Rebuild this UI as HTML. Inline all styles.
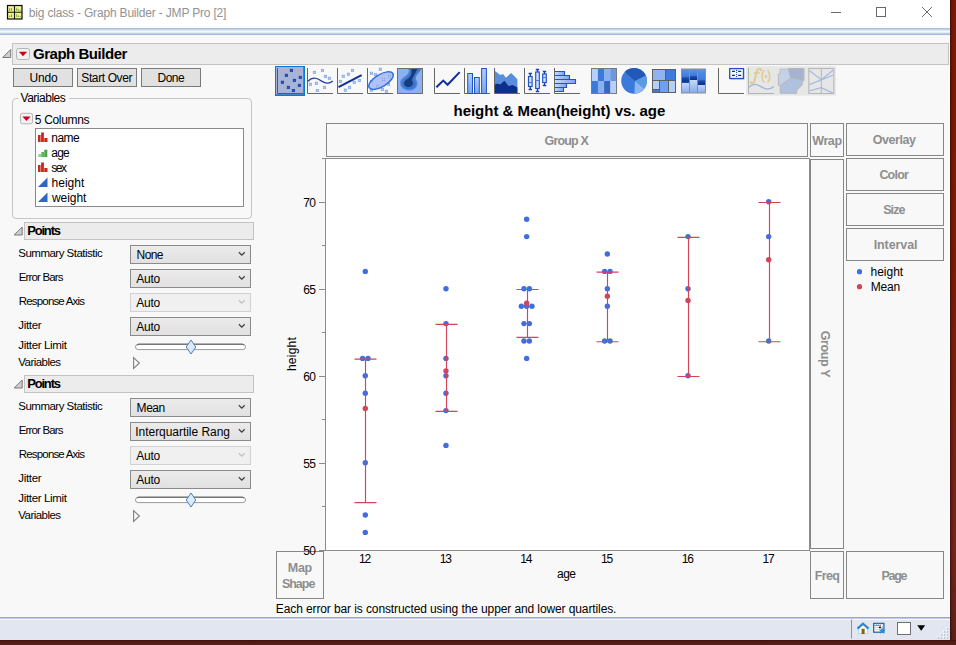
<!DOCTYPE html>
<html>
<head>
<meta charset="utf-8">
<title>big class - Graph Builder - JMP Pro [2]</title>
<style>
html,body{margin:0;padding:0;}
body{width:956px;height:645px;overflow:hidden;position:relative;background:#55201a;font-family:"Liberation Sans",sans-serif;font-size:12px;color:#000;}
.abs{position:absolute;}
#desk{position:absolute;left:950px;top:0;width:6px;height:645px;background:linear-gradient(to right,rgba(30,8,4,0.550) 0,rgba(30,8,4,0.250) 1.5px,rgba(0,0,0,0) 3.5px),linear-gradient(to bottom,#7a1806 0%,#7c1a08 45%,#74241a 85%,#5a2018 100%);}
#deskb{position:absolute;left:0;top:640px;width:956px;height:5px;background:linear-gradient(to bottom,#3c1009 0,#4c1a14 1.5px,#58201a 5px);}
#win{position:absolute;left:0;top:0;width:950px;height:640px;background:#f8f8f8;overflow:hidden;}
#titlebar{position:absolute;left:0;top:0;width:950px;height:28px;background:#fff;}
#band{position:absolute;left:0;top:28px;width:950px;height:7px;background:linear-gradient(to bottom,#a9bfda 0px,#adc3dd 1px,#d6e1ee 2px,#f5f7fb 3.5px,#e4ebf4 4.5px,#bdcfe5 5.5px,#a3bbd9 6.5px,#a3bbd9 7px);}
.t{position:absolute;white-space:nowrap;display:block;}
.hdr{position:absolute;background:#ececec;border:1px solid #c3c3c3;box-sizing:border-box;}
.btn{position:absolute;box-sizing:border-box;border:1px solid #7a7a7a;background:#e1e1e1;height:19px;width:60px;top:68px;}
.dd{position:absolute;box-sizing:border-box;left:130px;width:121px;height:19px;border:1px solid #8b8b8b;background:linear-gradient(to bottom,#ebebeb,#e1e1e1);}
.dd.dis{border-color:#d2d2d2;background:#f0f0f0;}
.zone{position:absolute;box-sizing:border-box;border:1px solid #868686;background:#f8f8f8;}
</style>
</head>
<body>
<div id="desk"></div><div id="deskb"></div>
<div id="win">
<div id="titlebar"></div>
<div id="band"></div>
<div class="abs" style="left:949px;top:35px;width:1px;height:583px;background:#fff;"></div>

<!-- title bar icon + window buttons -->
<svg class="abs" style="left:0;top:0" width="950" height="28">
  <rect x="7.500" y="5.500" width="14.500" height="13.500" fill="#f0f08e" stroke="#0a0a0a" stroke-width="1.200"/>
  <path d="M14.500 5.500 V19 M7.500 12.200 H22" stroke="#1a1a1a" stroke-width="1.100" fill="none"/>
  <g fill="#5a9a32"><rect x="9.300" y="8.200" width="0.900" height="2.600"/><rect x="11.200" y="8.200" width="0.900" height="2.600"/><rect x="16.300" y="8.200" width="0.900" height="2.600"/><rect x="18.200" y="9.200" width="0.900" height="1.600"/><rect x="19.800" y="10" width="0.900" height="0.800"/>
  <rect x="9.300" y="15.600" width="0.900" height="1.400"/><rect x="11.200" y="14.400" width="0.900" height="2.600"/><rect x="16.300" y="14.400" width="0.900" height="2.600"/><rect x="18.200" y="15.600" width="0.900" height="1.400"/><rect x="19.800" y="16.200" width="0.900" height="0.800"/></g>
  <path d="M831 12.500 H841" stroke="#686868" stroke-width="1"/>
  <rect x="876.500" y="7.500" width="9" height="9" fill="none" stroke="#686868" stroke-width="1"/>
  <path d="M922 7 L932 17 M932 7 L922 17" stroke="#6e6e6e" stroke-width="1" fill="none"/>
</svg>
<!-- Graph Builder header -->
<div class="hdr" style="left:12px;top:43px;width:937px;height:22px;"></div>
<div class="btn" style="left:13px;"></div>
<div class="btn" style="left:77px;"></div>
<div class="btn" style="left:141px;"></div>
<!-- Variables group -->
<div class="abs" style="left:12px;top:98px;width:240px;height:121px;border:1px solid #c6c6c6;border-radius:4px;box-sizing:border-box;"></div>
<div class="abs" style="left:35px;top:128px;width:209px;height:79px;border:1px solid #8a8a8a;background:#fff;box-sizing:border-box;"></div>
<div class="abs" style="left:18px;top:92px;width:51px;height:12px;background:#f8f8f8;"></div>
<svg class="abs" style="left:0;top:40px" width="260" height="180">
<path d="M2.7 17.5 L10.7 17.5 L10.7 9.5 Z" fill="#cfcfcf" stroke="#787878" stroke-width="1"/><rect x="16.5" y="8.5" width="13" height="11" rx="2" fill="#f1f1f1" stroke="#b4b4b4"/><path d="M18.9 11.8 L27.1 11.8 L23.0 16.3 Z" fill="#cc0014"/><rect x="20.5" y="73.3" width="12" height="10.5" rx="2" fill="#f1f1f1" stroke="#b4b4b4"/><path d="M22.4 76.6 L30.6 76.6 L26.5 81.1 Z" fill="#cc0014"/>
  <g fill="#cf2516">
    <rect x="38" y="95" width="2.600" height="7" fill="#b93324"/><rect x="41.100" y="92.500" width="2.800" height="9.500"/><rect x="44.300" y="98" width="3.200" height="4"/>
    <rect x="38" y="125" width="2.600" height="7" fill="#b93324"/><rect x="41.100" y="122.500" width="2.800" height="9.500"/><rect x="44.300" y="128" width="3.200" height="4"/>
  </g>
  <g>
    <rect x="38.300" y="114" width="3" height="3" fill="#93d293"/><rect x="41.300" y="112" width="3" height="5" fill="#5cb85c"/><rect x="44.300" y="109.700" width="3" height="7.300" fill="#47a647"/>
  </g>
  <g fill="#2f66c4">
    <path d="M38 147 L47.500 147 L47.500 137.500 Z"/>
    <path d="M38 162 L47.500 162 L47.500 152.500 Z"/>
  </g>
</svg>

<div class="hdr" style="left:24px;top:222px;width:230px;height:18px;"></div>
<div class="dd" style="top:245px;"></div>
<div class="dd" style="top:269px;"></div>
<div class="dd dis" style="top:293px;"></div>
<div class="dd" style="top:317px;"></div>
<svg class="abs" style="left:0;top:222px" width="260" height="150">
  <path d="M14.2 13 L22.2 13 L22.2 5 Z" fill="#cfcfcf" stroke="#787878" stroke-width="1"/>
  <g fill="none" stroke="#3c3c3c" stroke-width="1.250">
    <path d="M238.900 30.200 L241.800 33.100 L244.700 30.200"/>
    <path d="M238.900 54.200 L241.800 57.100 L244.700 54.200"/>
    <path d="M238.900 78.200 L241.800 81.100 L244.700 78.200" stroke="#c0c0c0"/>
    <path d="M238.900 102.200 L241.800 105.100 L244.700 102.200"/>
  </g>
  <rect x="135.500" y="122.200" width="110" height="5.400" rx="2.700" fill="#fff" stroke="#9a9a9a"/>
  <path d="M137 123.300 C137.600 122.500 138.200 122.200 139 122.200 H242 C242.800 122.200 243.400 122.500 244 123.300" fill="none" stroke="#5a5a5a" stroke-width="1"/>
  <path d="M191 118 L195.800 125 L191 132 L186.200 125 Z" fill="#dce9f8" stroke="#4c80c0" stroke-width="1"/>
  <path d="M133.600 135.600 L139.400 141 L133.600 146.400 Z" fill="#f8f8f8" stroke="#808080" stroke-width="1.100"/>
</svg>

<div class="hdr" style="left:24px;top:375px;width:230px;height:18px;"></div>
<div class="dd" style="top:398px;"></div>
<div class="dd" style="top:422px;"></div>
<div class="dd dis" style="top:446px;"></div>
<div class="dd" style="top:470px;"></div>
<svg class="abs" style="left:0;top:375px" width="260" height="150">
  <path d="M14.2 13 L22.2 13 L22.2 5 Z" fill="#cfcfcf" stroke="#787878" stroke-width="1"/>
  <g fill="none" stroke="#3c3c3c" stroke-width="1.250">
    <path d="M238.900 30.200 L241.800 33.100 L244.700 30.200"/>
    <path d="M238.900 54.200 L241.800 57.100 L244.700 54.200"/>
    <path d="M238.900 78.200 L241.800 81.100 L244.700 78.200" stroke="#c0c0c0"/>
    <path d="M238.900 102.200 L241.800 105.100 L244.700 102.200"/>
  </g>
  <rect x="135.500" y="122.200" width="110" height="5.400" rx="2.700" fill="#fff" stroke="#9a9a9a"/>
  <path d="M137 123.300 C137.600 122.500 138.200 122.200 139 122.200 H242 C242.800 122.200 243.400 122.500 244 123.300" fill="none" stroke="#5a5a5a" stroke-width="1"/>
  <path d="M191 118 L195.800 125 L191 132 L186.200 125 Z" fill="#dce9f8" stroke="#4c80c0" stroke-width="1"/>
  <path d="M133.600 135.600 L139.400 141 L133.600 146.400 Z" fill="#f8f8f8" stroke="#808080" stroke-width="1.100"/>
</svg>

<div class="zone" style="left:326px;top:123px;width:482px;height:34px;"></div>
<div class="zone" style="left:810px;top:123px;width:34px;height:34px;"></div>
<div class="zone" style="left:846px;top:123px;width:98px;height:33px;"></div>
<div class="zone" style="left:846px;top:158px;width:98px;height:33px;"></div>
<div class="zone" style="left:846px;top:193px;width:98px;height:33px;"></div>
<div class="zone" style="left:846px;top:228px;width:98px;height:33px;"></div>
<div class="zone" style="left:810px;top:159px;width:34px;height:390px;"></div>
<div class="zone" style="left:810px;top:551px;width:34px;height:48px;"></div>
<div class="zone" style="left:846px;top:551px;width:98px;height:48px;"></div>
<div class="zone" style="left:276px;top:551px;width:48px;height:48px;background:none;"></div>
<svg class="abs" style="left:0;top:0" width="950" height="100">
<defs>
<linearGradient id="gb" x1="0" y1="0" x2="0" y2="1"><stop offset="0" stop-color="#b4ccfa"/><stop offset="1" stop-color="#7fa4ec"/></linearGradient>
<linearGradient id="gh" x1="0" y1="0" x2="1" y2="0"><stop offset="0" stop-color="#c6dafc"/><stop offset="1" stop-color="#7ea4ee"/></linearGradient>
<linearGradient id="gl" x1="0" y1="0" x2="0" y2="1"><stop offset="0" stop-color="#c4d8fc"/><stop offset="1" stop-color="#88acf0"/></linearGradient>
<linearGradient id="gt" x1="0" y1="0" x2="0" y2="1"><stop offset="0" stop-color="#5a92e4"/><stop offset="1" stop-color="#3a78dc"/></linearGradient>
<linearGradient id="gd" x1="0" y1="0" x2="0" y2="1"><stop offset="0" stop-color="#1c4eb0"/><stop offset="1" stop-color="#08308c"/></linearGradient>
</defs>
<rect x="275" y="66" width="30" height="30" fill="#0a78d6"/><rect x="276" y="67" width="27.300" height="27.300" fill="#a7b4d7"/>
<path d="M277.500 68 V93.500 H303" fill="none" stroke="#4d587f" stroke-width="1"/>
<rect x="289.9" y="68.9" width="3" height="3" fill="#0c3aa8"/><path d="M289.9 70.4 H292.9 M291.4 68.9 V71.9" stroke="#3f68c8" stroke-width="1" stroke-opacity="0.55" fill="none"/><rect x="284.9" y="73.9" width="3" height="3" fill="#0c3aa8"/><path d="M284.9 75.4 H287.9 M286.4 73.9 V76.9" stroke="#3f68c8" stroke-width="1" stroke-opacity="0.55" fill="none"/><rect x="298.8" y="75.9" width="3" height="3" fill="#0c3aa8"/><path d="M298.8 77.4 H301.8 M300.3 75.9 V78.9" stroke="#3f68c8" stroke-width="1" stroke-opacity="0.55" fill="none"/><rect x="292.9" y="78.9" width="3" height="3" fill="#0c3aa8"/><path d="M292.9 80.4 H295.9 M294.4 78.9 V81.9" stroke="#3f68c8" stroke-width="1" stroke-opacity="0.55" fill="none"/><rect x="280.9" y="80.8" width="3" height="3" fill="#0c3aa8"/><path d="M280.9 82.3 H283.9 M282.4 80.8 V83.8" stroke="#3f68c8" stroke-width="1" stroke-opacity="0.55" fill="none"/><rect x="297.9" y="83.9" width="3" height="3" fill="#0c3aa8"/><path d="M297.9 85.4 H300.9 M299.4 83.9 V86.9" stroke="#3f68c8" stroke-width="1" stroke-opacity="0.55" fill="none"/><rect x="286.9" y="85.9" width="3" height="3" fill="#0c3aa8"/><path d="M286.9 87.4 H289.9 M288.4 85.9 V88.9" stroke="#3f68c8" stroke-width="1" stroke-opacity="0.55" fill="none"/><rect x="291.9" y="89.0" width="3" height="3" fill="#0c3aa8"/><path d="M291.9 90.5 H294.9 M293.4 89.0 V92.0" stroke="#3f68c8" stroke-width="1" stroke-opacity="0.55" fill="none"/>
<path d="M307.5 68 V93.500 H333" fill="none" stroke="#666666" stroke-width="1"/>
<rect x="312.9" y="70.9" width="3" height="3" fill="#7ea2e4"/><path d="M312.9 72.4 H315.9 M314.4 70.9 V73.9" stroke="#c4d6f6" stroke-width="1" stroke-opacity="0.55" fill="none"/><rect x="321.0" y="68.9" width="3" height="3" fill="#7ea2e4"/><path d="M321.0 70.4 H324.0 M322.5 68.9 V71.9" stroke="#c4d6f6" stroke-width="1" stroke-opacity="0.55" fill="none"/><rect x="323.9" y="74.9" width="3" height="3" fill="#7ea2e4"/><path d="M323.9 76.4 H326.9 M325.4 74.9 V77.9" stroke="#c4d6f6" stroke-width="1" stroke-opacity="0.55" fill="none"/><rect x="327.9" y="76.8" width="3" height="3" fill="#7ea2e4"/><path d="M327.9 78.3 H330.9 M329.4 76.8 V79.8" stroke="#c4d6f6" stroke-width="1" stroke-opacity="0.55" fill="none"/><rect x="308.9" y="82.8" width="3" height="3" fill="#7ea2e4"/><path d="M308.9 84.3 H311.9 M310.4 82.8 V85.8" stroke="#c4d6f6" stroke-width="1" stroke-opacity="0.55" fill="none"/><rect x="314.9" y="81.8" width="3" height="3" fill="#7ea2e4"/><path d="M314.9 83.3 H317.9 M316.4 81.8 V84.8" stroke="#c4d6f6" stroke-width="1" stroke-opacity="0.55" fill="none"/><rect x="323.0" y="85.9" width="3" height="3" fill="#7ea2e4"/><path d="M323.0 87.4 H326.0 M324.5 85.9 V88.9" stroke="#c4d6f6" stroke-width="1" stroke-opacity="0.55" fill="none"/><rect x="315.9" y="89.0" width="3" height="3" fill="#7ea2e4"/><path d="M315.9 90.5 H318.9 M317.4 89.0 V92.0" stroke="#c4d6f6" stroke-width="1" stroke-opacity="0.55" fill="none"/>
<path d="M308 81.300 C310.500 78.500 313.500 77.600 316.500 78.500 C320.500 79.700 323.500 83.200 327.200 83.200 C329.500 83.200 331.500 82.300 332.700 81" fill="none" stroke="#1d3f9f" stroke-width="1.300"/>
<path d="M337.5 68 V93.500 H363" fill="none" stroke="#666666" stroke-width="1"/>
<rect x="351.0" y="68.9" width="3" height="3" fill="#7ea2e4"/><path d="M351.0 70.4 H354.0 M352.5 68.9 V71.9" stroke="#c4d6f6" stroke-width="1" stroke-opacity="0.55" fill="none"/><rect x="346.9" y="72.8" width="3" height="3" fill="#7ea2e4"/><path d="M346.9 74.3 H349.9 M348.4 72.8 V75.8" stroke="#c4d6f6" stroke-width="1" stroke-opacity="0.55" fill="none"/><rect x="341.8" y="74.8" width="3" height="3" fill="#7ea2e4"/><path d="M341.8 76.3 H344.8 M343.3 74.8 V77.8" stroke="#c4d6f6" stroke-width="1" stroke-opacity="0.55" fill="none"/><rect x="338.9" y="79.9" width="3" height="3" fill="#7ea2e4"/><path d="M338.9 81.4 H341.9 M340.4 79.9 V82.9" stroke="#c4d6f6" stroke-width="1" stroke-opacity="0.55" fill="none"/><rect x="357.9" y="79.0" width="3" height="3" fill="#7ea2e4"/><path d="M357.9 80.5 H360.9 M359.4 79.0 V82.0" stroke="#c4d6f6" stroke-width="1" stroke-opacity="0.55" fill="none"/><rect x="352.8" y="80.9" width="3" height="3" fill="#7ea2e4"/><path d="M352.8 82.4 H355.8 M354.3 80.9 V83.9" stroke="#c4d6f6" stroke-width="1" stroke-opacity="0.55" fill="none"/><rect x="348.0" y="85.9" width="3" height="3" fill="#7ea2e4"/><path d="M348.0 87.4 H351.0 M349.5 85.9 V88.9" stroke="#c4d6f6" stroke-width="1" stroke-opacity="0.55" fill="none"/><rect x="343.9" y="88.7" width="3" height="3" fill="#7ea2e4"/><path d="M343.9 90.2 H346.9 M345.4 88.7 V91.7" stroke="#c4d6f6" stroke-width="1" stroke-opacity="0.55" fill="none"/>
<path d="M338.500 87.200 L361.600 75.200" fill="none" stroke="#0d2f9a" stroke-width="2"/>
<path d="M367.5 68 V93.500 H393" fill="none" stroke="#666666" stroke-width="1"/>
<ellipse cx="381" cy="80.600" rx="13.800" ry="6.100" transform="rotate(-31 381 80.600)" fill="#b3c2f2"/>
<rect x="378.8" y="67.8" width="3" height="3" fill="#7ea2e4"/><path d="M378.8 69.3 H381.8 M380.3 67.8 V70.8" stroke="#c4d6f6" stroke-width="1" stroke-opacity="0.55" fill="none"/><rect x="369.9" y="71.8" width="3" height="3" fill="#7ea2e4"/><path d="M369.9 73.3 H372.9 M371.4 71.8 V74.8" stroke="#c4d6f6" stroke-width="1" stroke-opacity="0.55" fill="none"/><rect x="373.9" y="73.1" width="3" height="3" fill="#7ea2e4"/><path d="M373.9 74.6 H376.9 M375.4 73.1 V76.1" stroke="#c4d6f6" stroke-width="1" stroke-opacity="0.55" fill="none"/><rect x="388.0" y="74.8" width="3" height="3" fill="#7ea2e4"/><path d="M388.0 76.3 H391.0 M389.5 74.8 V77.8" stroke="#c4d6f6" stroke-width="1" stroke-opacity="0.55" fill="none"/><rect x="382.0" y="78.0" width="3" height="3" fill="#7ea2e4"/><path d="M382.0 79.5 H385.0 M383.5 78.0 V81.0" stroke="#c4d6f6" stroke-width="1" stroke-opacity="0.55" fill="none"/><rect x="369.9" y="79.9" width="3" height="3" fill="#7ea2e4"/><path d="M369.9 81.4 H372.9 M371.4 79.9 V82.9" stroke="#c4d6f6" stroke-width="1" stroke-opacity="0.55" fill="none"/><rect x="387.0" y="82.8" width="3" height="3" fill="#7ea2e4"/><path d="M387.0 84.3 H390.0 M388.5 82.8 V85.8" stroke="#c4d6f6" stroke-width="1" stroke-opacity="0.55" fill="none"/><rect x="376.0" y="84.8" width="3" height="3" fill="#7ea2e4"/><path d="M376.0 86.3 H379.0 M377.5 84.8 V87.8" stroke="#c4d6f6" stroke-width="1" stroke-opacity="0.55" fill="none"/><rect x="380.9" y="87.9" width="3" height="3" fill="#7ea2e4"/><path d="M380.9 89.4 H383.9 M382.4 87.9 V90.9" stroke="#c4d6f6" stroke-width="1" stroke-opacity="0.55" fill="none"/><rect x="369.9" y="88.7" width="3" height="3" fill="#7ea2e4"/><path d="M369.9 90.2 H372.9 M371.4 88.7 V91.7" stroke="#c4d6f6" stroke-width="1" stroke-opacity="0.55" fill="none"/><rect x="384.9" y="89.8" width="3" height="3" fill="#7ea2e4"/><path d="M384.9 91.3 H387.9 M386.4 89.8 V92.8" stroke="#c4d6f6" stroke-width="1" stroke-opacity="0.55" fill="none"/>
<ellipse cx="381" cy="80.600" rx="13.800" ry="6.100" transform="rotate(-31 381 80.600)" fill="none" stroke="#2e6fe2" stroke-width="1.500"/>
<rect x="397.500" y="68.500" width="25" height="25" fill="#8cb1f0" stroke="#6e6e6e" stroke-width="1"/>
<path d="M408 69 C410 71 408.500 73.500 406.100 75.500 C403.500 77.500 401 78.500 400.400 81.500 C399.800 85 401.500 88 405 89.600 C409 91.200 413.500 90.500 416 87.500 C418.200 85 417.800 82 416 79.500 C415.300 77.500 416.500 75.500 418 73.800 C419.500 72 420.800 70.500 421.500 69 Z" fill="#4d82d4"/>
<path d="M409.800 69 C411 71.500 410 74 408 76.200 C405.500 78.500 403 79.500 402.400 82 C401.800 85 403.300 87.300 406 88.400 C409.500 89.600 413 89 414.800 86.500 C416.200 84.500 415.800 82 414.300 80 C413.600 78 415 75.800 416.400 73.800 C417.800 72 419 70.500 419.600 69 Z" fill="#3f72c8"/>
<path d="M411.400 69 V73.500 C411 75.500 410 77 408.500 78.200 C406.500 79.500 404.700 80.500 404.200 82.800 C403.800 85 405 86.600 407.500 87 C410 87.400 412.300 86.200 412.800 83.800 C413.100 82.300 412.500 81.200 411.800 80.300 C412.200 78.500 413 77.200 413.800 76 L417.300 69 Z" fill="#163c80"/>
<rect x="397.500" y="68.500" width="25" height="25" fill="none" stroke="#6e6e6e" stroke-width="1"/>
<path d="M434.5 68 V93.500 H460" fill="none" stroke="#666666" stroke-width="1"/>
<path d="M436.400 87.300 L443.200 80.600 L447.600 84.800 L459.700 72.100" fill="none" stroke="#0d2f9a" stroke-width="2" stroke-linejoin="miter"/>
<path d="M464.5 68 V93.500 H490" fill="none" stroke="#666666" stroke-width="1"/>
<rect x="467.700" y="73.500" width="4.800" height="20" fill="url(#gb)" stroke="#1f55c8"/><rect x="474.500" y="77.500" width="4.800" height="16" fill="url(#gb)" stroke="#1f55c8"/><rect x="481.600" y="68.500" width="4.800" height="25" fill="url(#gb)" stroke="#1f55c8"/>
<path d="M494.5 68 V93.500 H520" fill="none" stroke="#666666" stroke-width="1"/>
<path d="M495 70.900 L500.200 75.100 L503.100 74 L505.900 77.700 L511.200 73 L517.400 79.300 V93 H495 Z" fill="#5a8edc"/>
<path d="M495 84.500 L497.600 83.400 L500.200 84.500 L504.400 80.800 L508.500 86.100 L512.700 85 L517.400 87.600 V93 H495 Z" fill="#0b2f8a"/>
<path d="M524.5 68 V93.500 H550" fill="none" stroke="#666666" stroke-width="1"/>
<path d="M530.3 73.5 V89.5 M528.5999999999999 73.5 H532.0 M528.5999999999999 89.5 H532.0" stroke="#1442b4" stroke-width="1.300" fill="none"/><rect x="528.5" y="76.5" width="3.600" height="10.0" fill="#d2e1fb" stroke="#1c50c4" stroke-width="1.150"/><path d="M528.5 82.5 H532.0999999999999" stroke="#3f72d8" stroke-width="0.900"/>
<path d="M537.5 69.5 V91.5 M535.8 69.5 H539.2 M535.8 91.5 H539.2" stroke="#1442b4" stroke-width="1.300" fill="none"/><rect x="535.7" y="72" width="3.600" height="16.5" fill="#d2e1fb" stroke="#1c50c4" stroke-width="1.150"/><path d="M535.7 80.5 H539.3" stroke="#3f72d8" stroke-width="0.900"/>
<path d="M544.5 71.5 V85.5 M542.8 71.5 H546.2 M542.8 85.5 H546.2" stroke="#1442b4" stroke-width="1.300" fill="none"/><rect x="542.7" y="74" width="3.600" height="8.5" fill="#d2e1fb" stroke="#1c50c4" stroke-width="1.150"/><path d="M542.7 77.5 H546.3" stroke="#3f72d8" stroke-width="0.900"/>
<path d="M554.5 68 V93.500 H580" fill="none" stroke="#666666" stroke-width="1"/>
<rect x="555" y="71.5" width="9.5" height="4.0" fill="url(#gh)"/><path d="M555 71.5 H564.5 V75.5 H555" fill="none" stroke="#1f55c8" stroke-width="1.100"/>
<rect x="555" y="75.5" width="14.5" height="4.0" fill="url(#gh)"/><path d="M555 75.5 H569.5 V79.5 H555" fill="none" stroke="#1f55c8" stroke-width="1.100"/>
<rect x="555" y="79.5" width="20.5" height="4.0" fill="url(#gh)"/><path d="M555 79.5 H575.5 V83.5 H555" fill="none" stroke="#1f55c8" stroke-width="1.100"/>
<rect x="555" y="83.5" width="11.5" height="4.0" fill="url(#gh)"/><path d="M555 83.5 H566.5 V87.5 H555" fill="none" stroke="#1f55c8" stroke-width="1.100"/>
<rect x="555" y="87.5" width="8.5" height="4.0" fill="url(#gh)"/><path d="M555 87.5 H563.5 V91.5 H555" fill="none" stroke="#1f55c8" stroke-width="1.100"/>
<rect x="591.5" y="68.500" width="6.7" height="12.500" fill="#b6d0fa"/>
<rect x="591.5" y="81" width="6.7" height="12.500" fill="#3b79da"/>
<rect x="597.9" y="68.500" width="6.5" height="12.500" fill="#3b79da"/>
<rect x="597.9" y="81" width="6.5" height="12.500" fill="#8ab0ee"/>
<rect x="604.1" y="68.500" width="6.5" height="12.500" fill="#8ab0ee"/>
<rect x="604.1" y="81" width="6.5" height="12.500" fill="#3666c2"/>
<rect x="610.3" y="68.500" width="6.5" height="12.500" fill="#6a98e2"/>
<rect x="610.3" y="81" width="6.5" height="12.500" fill="#b6d0fa"/>
<rect x="591.500" y="68.500" width="25" height="25" fill="none" stroke="#7a7a7a" stroke-width="1"/>
<clipPath id="pc"><circle cx="634.1" cy="80.8" r="12.9"/></clipPath><circle cx="634.1" cy="80.8" r="12.9" fill="#3a7ada"/><g clip-path="url(#pc)">
<path d="M634.9 81.0 L623.83 71.03 A14.9 14.9 0 0 1 648.29 74.47 Z" fill="#2458b8"/>
<path d="M634.9 81.0 L648.29 74.47 A14.9 14.9 0 0 1 646.31 90.58 Z" fill="#5c9ae2"/>
<path d="M634.9 81.0 L646.31 90.58 A14.9 14.9 0 0 1 634.38 95.89 Z" fill="#8cb6f6"/></g>
<rect x="652" y="69" width="24" height="24" fill="#5f5f5f"/>
<rect x="653" y="70" width="12" height="10" fill="#8fb4f0"/><rect x="666" y="70" width="9" height="10" fill="#3c7cdc"/>
<rect x="653" y="81" width="6" height="8" fill="#b4d0fa"/><rect x="653" y="90" width="6" height="2" fill="#3c7cdc"/>
<rect x="660" y="81" width="8" height="11" fill="#6ea0f4"/><rect x="669" y="81" width="6" height="11" fill="#b4d0fa"/>
<rect x="681" y="68.500" width="25" height="25" fill="#8e8e8e"/>
<rect x="682" y="69.500" width="7" height="7.7" fill="url(#gt)"/><rect x="682" y="77.2" width="7" height="5.7" fill="url(#gd)"/><rect x="682" y="82.9" width="7" height="9.6" fill="url(#gl)"/>
<rect x="690" y="69.500" width="7" height="6.6" fill="url(#gt)"/><rect x="690" y="76.1" width="7" height="3.9" fill="url(#gd)"/><rect x="690" y="80" width="7" height="12.5" fill="url(#gl)"/>
<rect x="698" y="69.500" width="7" height="10.8" fill="url(#gt)"/><rect x="698" y="80.3" width="7" height="4.7" fill="url(#gd)"/><rect x="698" y="85" width="7" height="7.5" fill="url(#gl)"/>
<path d="M718.5 68 V93.500 H744" fill="none" stroke="#666666" stroke-width="1"/>
<rect x="730.300" y="69.300" width="14" height="10.300" fill="#b9c4dc"/>
<rect x="729.700" y="68.600" width="13.800" height="9.900" fill="#f4f8ff" stroke="#2450c4" stroke-width="1.300"/>
<path d="M732 71.400 H735 M738.200 71.400 H741.200 M732 75.400 H735 M738.200 75.400 H741.200" stroke="#0c2f9a" stroke-width="1.100"/>
<g fill="#0c2f9a"><circle cx="736.600" cy="70.400" r="0.600"/><circle cx="736.600" cy="72.500" r="0.600"/><circle cx="736.600" cy="74.500" r="0.600"/><circle cx="736.600" cy="76.500" r="0.600"/></g>
<rect x="746.300" y="66.200" width="89.600" height="29.400" fill="#e6e6e6"/>
<path d="M748.500 68 V93.500 H774" fill="none" stroke="#b2b2b2" stroke-width="1"/>
<path d="M761.200 70.300 C760.600 68.300 757.900 68 757.200 70.600 L754.400 80.800 C753.800 83.400 751.700 83.700 750.600 82.300" fill="none" stroke="#ddcc90" stroke-width="2" stroke-linecap="round"/><path d="M753.600 73 H760" stroke="#ddcc90" stroke-width="1.400"/>
<path d="M764.100 70.200 C761.300 73.500 761.300 79.300 764.100 82.600 M767.600 70.200 C770.400 73.500 770.400 79.300 767.600 82.600" fill="none" stroke="#ddcc90" stroke-width="1.500"/><circle cx="765.900" cy="76.500" r="1.400" fill="#ddcc90"/>
<path d="M748.800 87.300 C751 85.200 753 84.200 755 84.300 C759.500 84.500 763 89 767.600 89.100 C770 89.100 772.300 88 773.900 86.600" fill="none" stroke="#9fb3d8" stroke-width="1.300"/>
<path d="M788.200 68.500 H804 V80.600 L802.200 81.600 V85.100 L796.700 90.100 V93.300 H780.200 V85.600 H778.400 V74 H780.200 V69.200 H788.200 Z" fill="#b0c1df" stroke="#b6b6b6" stroke-width="1"/>
<path d="M788.200 68.800 C788.800 72.500 790 75.500 790.700 78.100 L780.200 85.400 V85.600 H778.900 V74.300 H780.600 V69.600 H788 Z" fill="#c5d1e7"/>
<path d="M788.600 69 H803.500 V80.400 L790.700 78.100 C790 75.500 788.800 72.500 788.600 69 Z" fill="#a5b3d0"/>
<path d="M788.200 68.500 C788.800 72.500 790 75.500 790.700 78.100 L804 80.600 M790.700 78.100 L780.200 85.600" fill="none" stroke="#b8b8b8" stroke-width="0.900"/>
<rect x="808.800" y="68.500" width="25" height="25" fill="#e6e6e6" stroke="#b6b6b6" stroke-width="1"/>
<path d="M809.300 70.500 L821.300 79.800 L833.400 70 M809.300 84.600 L821.300 79.900 L833.400 75 M809.300 90.900 L821.300 87.600 L832.900 93.100" fill="none" stroke="#a6bbe2" stroke-width="1.200"/>
<path d="M821.300 68.500 V93.500" stroke="#b6b6b6" stroke-width="1"/>
</svg><svg class="abs" style="left:0;top:0" width="950" height="640">
<rect x="326" y="159" width="483" height="391" fill="#fff"/>
<path d="M322 158.500 H810 M325.500 158 V551 M319 550.500 H810 M809.500 158 V551" stroke="#8c8c8c" stroke-width="1" fill="none"/>
<path d="M319 202.5 H325 M319 289.5 H325 M319 376.5 H325 M319 463.5 H325 M322 245.5 H325 M322 332.5 H325 M322 419.5 H325 M322 506.5 H325" stroke="#8c8c8c" stroke-width="1" fill="none"/>
<circle cx="365.30" cy="271.40" r="2.7" fill="#416de0"/>
<circle cx="362.60" cy="358.40" r="2.7" fill="#416de0"/>
<circle cx="368.00" cy="358.40" r="2.7" fill="#416de0"/>
<circle cx="365.30" cy="375.80" r="2.7" fill="#416de0"/>
<circle cx="365.30" cy="393.20" r="2.7" fill="#416de0"/>
<circle cx="365.30" cy="462.80" r="2.7" fill="#416de0"/>
<circle cx="365.30" cy="515.00" r="2.7" fill="#416de0"/>
<circle cx="365.30" cy="532.40" r="2.7" fill="#416de0"/>
<circle cx="445.98" cy="288.80" r="2.7" fill="#416de0"/>
<circle cx="445.98" cy="323.60" r="2.7" fill="#416de0"/>
<circle cx="445.98" cy="358.40" r="2.7" fill="#416de0"/>
<circle cx="445.98" cy="375.80" r="2.7" fill="#416de0"/>
<circle cx="445.98" cy="393.20" r="2.7" fill="#416de0"/>
<circle cx="445.98" cy="410.60" r="2.7" fill="#416de0"/>
<circle cx="445.98" cy="445.40" r="2.7" fill="#416de0"/>
<circle cx="526.66" cy="219.20" r="2.7" fill="#416de0"/>
<circle cx="526.66" cy="236.60" r="2.7" fill="#416de0"/>
<circle cx="523.96" cy="288.80" r="2.7" fill="#416de0"/>
<circle cx="529.36" cy="288.80" r="2.7" fill="#416de0"/>
<circle cx="521.36" cy="306.20" r="2.7" fill="#416de0"/>
<circle cx="526.66" cy="306.20" r="2.7" fill="#416de0"/>
<circle cx="531.96" cy="306.20" r="2.7" fill="#416de0"/>
<circle cx="523.96" cy="323.60" r="2.7" fill="#416de0"/>
<circle cx="529.36" cy="323.60" r="2.7" fill="#416de0"/>
<circle cx="523.96" cy="341.00" r="2.7" fill="#416de0"/>
<circle cx="529.36" cy="341.00" r="2.7" fill="#416de0"/>
<circle cx="526.66" cy="358.40" r="2.7" fill="#416de0"/>
<circle cx="607.34" cy="254.00" r="2.7" fill="#416de0"/>
<circle cx="604.64" cy="271.40" r="2.7" fill="#416de0"/>
<circle cx="610.04" cy="271.40" r="2.7" fill="#416de0"/>
<circle cx="607.34" cy="288.80" r="2.7" fill="#416de0"/>
<circle cx="607.34" cy="306.20" r="2.7" fill="#416de0"/>
<circle cx="604.64" cy="341.00" r="2.7" fill="#416de0"/>
<circle cx="610.04" cy="341.00" r="2.7" fill="#416de0"/>
<circle cx="688.02" cy="236.60" r="2.7" fill="#416de0"/>
<circle cx="688.02" cy="288.80" r="2.7" fill="#416de0"/>
<circle cx="688.02" cy="375.80" r="2.7" fill="#416de0"/>
<circle cx="768.70" cy="201.80" r="2.7" fill="#416de0"/>
<circle cx="768.70" cy="236.60" r="2.7" fill="#416de0"/>
<circle cx="768.70" cy="341.00" r="2.7" fill="#416de0"/>
<path d="M365.50 359.10 V502.65 M354.50 359.10 H376.50 M354.50 502.65 H376.50" stroke="#d1445a" stroke-width="1.150" fill="none"/>
<circle cx="365.30" cy="408.43" r="2.7" fill="#d1445a"/>
<path d="M446.50 324.30 V411.30 M435.50 324.30 H457.50 M435.50 411.30 H457.50" stroke="#d1445a" stroke-width="1.150" fill="none"/>
<circle cx="445.98" cy="370.83" r="2.7" fill="#d1445a"/>
<path d="M527.50 289.50 V337.35 M516.50 289.50 H538.50 M516.50 337.35 H538.50" stroke="#d1445a" stroke-width="1.150" fill="none"/>
<circle cx="526.66" cy="303.30" r="2.7" fill="#d1445a"/>
<path d="M607.50 272.10 V341.70 M596.50 272.10 H618.50 M596.50 341.70 H618.50" stroke="#d1445a" stroke-width="1.150" fill="none"/>
<circle cx="607.34" cy="296.26" r="2.7" fill="#d1445a"/>
<path d="M688.50 237.30 V376.50 M677.50 237.30 H699.50 M677.50 376.50 H699.50" stroke="#d1445a" stroke-width="1.150" fill="none"/>
<circle cx="688.02" cy="300.40" r="2.7" fill="#d1445a"/>
<path d="M769.50 202.50 V341.70 M758.50 202.50 H780.50 M758.50 341.70 H780.50" stroke="#d1445a" stroke-width="1.150" fill="none"/>
<circle cx="768.70" cy="259.80" r="2.7" fill="#d1445a"/>
<circle cx="859.500" cy="271.700" r="2.600" fill="#416de0"/><circle cx="859.500" cy="286.700" r="2.600" fill="#d1445a"/>
</svg><span class="t" style="left:28.80px;top:5.60px;font-size:12px;line-height:14px;letter-spacing:-0.182px;color:#929292;">big class - Graph Builder - JMP Pro [2]</span>
<span class="t" style="left:33.00px;top:45.00px;font-size:15px;line-height:17px;letter-spacing:-0.473px;font-weight:bold;">Graph Builder</span>
<span class="t" style="left:29.50px;top:71.00px;font-size:12px;line-height:14px;letter-spacing:-0.171px;">Undo</span>
<span class="t" style="left:81.30px;top:71.00px;font-size:12px;line-height:14px;letter-spacing:-0.387px;">Start Over</span>
<span class="t" style="left:157.50px;top:71.00px;font-size:12px;line-height:14px;letter-spacing:-0.505px;">Done</span>
<span class="t" style="left:20.50px;top:90.80px;font-size:12px;line-height:14px;letter-spacing:-0.480px;background:#f8f8f8;">Variables</span>
<span class="t" style="left:34.80px;top:112.80px;font-size:12px;line-height:14px;letter-spacing:-0.332px;">5 Columns</span>
<span class="t" style="left:51.30px;top:131.00px;font-size:12px;line-height:14px;letter-spacing:-0.548px;">name</span>
<span class="t" style="left:51.30px;top:146.00px;font-size:12px;line-height:14px;letter-spacing:-0.824px;">age</span>
<span class="t" style="left:51.30px;top:160.80px;font-size:12px;line-height:14px;letter-spacing:-1.487px;">sex</span>
<span class="t" style="left:51.50px;top:175.80px;font-size:12px;line-height:14px;letter-spacing:0.028px;">height</span>
<span class="t" style="left:52.00px;top:190.80px;font-size:12px;line-height:14px;letter-spacing:-0.071px;">weight</span>
<span class="t" style="left:27.20px;top:223.00px;font-size:13px;line-height:15px;letter-spacing:-1.179px;font-weight:bold;">Points</span>
<span class="t" style="left:18.30px;top:247.00px;font-size:11.5px;line-height:12px;letter-spacing:-0.513px;">Summary Statistic</span>
<span class="t" style="left:18.80px;top:270.80px;font-size:11.5px;line-height:12px;letter-spacing:-0.850px;">Error Bars</span>
<span class="t" style="left:18.80px;top:294.60px;font-size:11.5px;line-height:12px;letter-spacing:-0.830px;">Response Axis</span>
<span class="t" style="left:18.30px;top:318.80px;font-size:11.5px;line-height:12px;letter-spacing:-0.318px;">Jitter</span>
<span class="t" style="left:18.30px;top:338.80px;font-size:11.5px;line-height:12px;letter-spacing:-0.336px;">Jitter Limit</span>
<span class="t" style="left:18.30px;top:355.80px;font-size:11.5px;line-height:12px;letter-spacing:-0.542px;">Variables</span>
<span class="t" style="left:136.60px;top:248.30px;font-size:12px;line-height:14px;letter-spacing:-0.605px;">None</span>
<span class="t" style="left:136.30px;top:272.20px;font-size:12px;line-height:14px;letter-spacing:-0.271px;">Auto</span>
<span class="t" style="left:136.30px;top:296.20px;font-size:12px;line-height:14px;letter-spacing:-0.271px;">Auto</span>
<span class="t" style="left:136.30px;top:320.20px;font-size:12px;line-height:14px;letter-spacing:-0.271px;">Auto</span>
<span class="t" style="left:27.20px;top:376.00px;font-size:13px;line-height:15px;letter-spacing:-1.179px;font-weight:bold;">Points</span>
<span class="t" style="left:18.30px;top:400.00px;font-size:11.5px;line-height:12px;letter-spacing:-0.513px;">Summary Statistic</span>
<span class="t" style="left:18.80px;top:423.80px;font-size:11.5px;line-height:12px;letter-spacing:-0.850px;">Error Bars</span>
<span class="t" style="left:18.80px;top:447.60px;font-size:11.5px;line-height:12px;letter-spacing:-0.830px;">Response Axis</span>
<span class="t" style="left:18.30px;top:471.80px;font-size:11.5px;line-height:12px;letter-spacing:-0.318px;">Jitter</span>
<span class="t" style="left:18.30px;top:491.80px;font-size:11.5px;line-height:12px;letter-spacing:-0.336px;">Jitter Limit</span>
<span class="t" style="left:18.30px;top:508.80px;font-size:11.5px;line-height:12px;letter-spacing:-0.542px;">Variables</span>
<span class="t" style="left:136.60px;top:401.30px;font-size:12px;line-height:14px;letter-spacing:-0.448px;">Mean</span>
<span class="t" style="left:135.30px;top:425.20px;font-size:12px;line-height:14px;letter-spacing:-0.042px;">Interquartile Rang</span>
<span class="t" style="left:136.30px;top:449.20px;font-size:12px;line-height:14px;letter-spacing:-0.271px;">Auto</span>
<span class="t" style="left:136.30px;top:473.20px;font-size:12px;line-height:14px;letter-spacing:-0.271px;">Auto</span>
<span class="t" style="left:453.50px;top:102.20px;font-size:15px;line-height:17px;letter-spacing:-0.024px;font-weight:bold;">height &amp; Mean(height) vs. age</span>
<span class="t" style="left:544.50px;top:134.00px;font-size:12.5px;line-height:14px;letter-spacing:-0.828px;font-weight:bold;color:#8e8e8e;">Group X</span>
<span class="t" style="left:812.30px;top:134.10px;font-size:12.5px;line-height:14px;letter-spacing:-0.430px;font-weight:bold;color:#8e8e8e;">Wrap</span>
<span class="t" style="left:872.80px;top:133.30px;font-size:12.5px;line-height:14px;letter-spacing:-0.436px;font-weight:bold;color:#8e8e8e;">Overlay</span>
<span class="t" style="left:879.40px;top:168.20px;font-size:12.5px;line-height:14px;letter-spacing:-0.793px;font-weight:bold;color:#8e8e8e;">Color</span>
<span class="t" style="left:883.20px;top:202.90px;font-size:12.5px;line-height:14px;letter-spacing:-0.920px;font-weight:bold;color:#8e8e8e;">Size</span>
<span class="t" style="left:873.70px;top:237.90px;font-size:12.5px;line-height:14px;letter-spacing:-0.099px;font-weight:bold;color:#8e8e8e;">Interval</span>
<span class="t" style="left:814.70px;top:568.80px;font-size:12.5px;line-height:14px;letter-spacing:-0.617px;font-weight:bold;color:#8e8e8e;">Freq</span>
<span class="t" style="left:881.50px;top:568.80px;font-size:12.5px;line-height:14px;letter-spacing:-1.275px;font-weight:bold;color:#8e8e8e;">Page</span>
<span class="t" style="left:287.80px;top:561.30px;font-size:12.5px;line-height:14px;letter-spacing:-0.332px;font-weight:bold;color:#8e8e8e;">Map</span>
<span class="t" style="left:281.90px;top:577.00px;font-size:12.5px;line-height:14px;letter-spacing:-1.015px;font-weight:bold;color:#8e8e8e;">Shape</span>
<span class="t" style="left:870.50px;top:265.20px;font-size:12px;line-height:14px;letter-spacing:-0.012px;">height</span>
<span class="t" style="left:870.80px;top:279.60px;font-size:12px;line-height:14px;letter-spacing:-0.215px;">Mean</span>
<span class="t" style="left:557.10px;top:567.40px;font-size:12px;line-height:14px;letter-spacing:-0.624px;">age</span>
<span class="t" style="left:275.80px;top:601.80px;font-size:12px;line-height:14px;letter-spacing:-0.106px;">Each error bar is constructed using the upper and lower quartiles.</span>
<span class="t" style="left:303.30px;top:195.60px;font-size:12px;line-height:14px;letter-spacing:-0.774px;">70</span>
<span class="t" style="left:303.30px;top:282.60px;font-size:12px;line-height:14px;letter-spacing:-0.774px;">65</span>
<span class="t" style="left:303.30px;top:369.60px;font-size:12px;line-height:14px;letter-spacing:-0.774px;">60</span>
<span class="t" style="left:303.30px;top:456.60px;font-size:12px;line-height:14px;letter-spacing:-0.774px;">55</span>
<span class="t" style="left:303.30px;top:543.60px;font-size:12px;line-height:14px;letter-spacing:-0.774px;">50</span>
<span class="t" style="left:359.00px;top:551.90px;font-size:12px;line-height:14px;letter-spacing:-1.174px;">12</span>
<span class="t" style="left:439.68px;top:551.90px;font-size:12px;line-height:14px;letter-spacing:-1.174px;">13</span>
<span class="t" style="left:520.36px;top:551.90px;font-size:12px;line-height:14px;letter-spacing:-1.174px;">14</span>
<span class="t" style="left:601.04px;top:551.90px;font-size:12px;line-height:14px;letter-spacing:-1.174px;">15</span>
<span class="t" style="left:681.72px;top:551.90px;font-size:12px;line-height:14px;letter-spacing:-1.174px;">16</span>
<span class="t" style="left:762.40px;top:551.90px;font-size:12px;line-height:14px;letter-spacing:-1.174px;">17</span>
<span class="t" style="left:292px;top:354px;width:0;height:0;"><span style="position:absolute;left:-30px;top:-7px;width:60px;height:14px;line-height:14px;text-align:center;font-size:12px;letter-spacing:0.250px;transform:rotate(-90deg);">height</span></span>
<span class="t" style="left:825.400px;top:354.300px;width:0;height:0;"><span style="position:absolute;left:-40px;top:-7px;width:80px;height:14px;line-height:14px;text-align:center;font-size:12.500px;font-weight:bold;color:#8e8e8e;letter-spacing:-0.380px;transform:rotate(90deg);">Group Y</span></span>

<div class="abs" style="left:0;top:617px;width:950px;height:23px;background:#e1e6f1;"></div>
<div class="abs" style="left:0;top:617px;width:950px;height:1px;background:#9ca6d0;"></div>
<div class="abs" style="left:0;top:618px;width:950px;height:1px;background:#c4cae3;"></div>
<div class="abs" style="left:0;top:619px;width:950px;height:1px;background:#f7f8fc;"></div>
<svg class="abs" style="left:846px;top:617px" width="104" height="23">
  <path d="M5.500 2.500 V21.500" stroke="#8b91b3" stroke-width="1"/>
  <!-- home -->
  <path d="M12.600 10.600 L17 7.400 L21.400 10.600 V16.700 H12.600 Z" fill="#f4fafe" stroke="#a6d6f0" stroke-width="0.900"/>
  <path d="M11.500 11.600 L17 6.600 L22.500 11.600" fill="none" stroke="#2888d6" stroke-width="2.100" stroke-linejoin="miter"/>
  <rect x="15.600" y="11.800" width="3" height="5.200" fill="#8a6204"/>
  <!-- table -->
  <rect x="27.700" y="6.400" width="10.200" height="8.800" fill="#fdfdff" stroke="#2a5eb4" stroke-width="1.300"/>
  <path d="M28.400 8.600 H35" stroke="#f06464" stroke-width="1"/>
  <path d="M28.400 10.600 H33 M28.400 12.600 H33" stroke="#f3b6be" stroke-width="0.800"/>
  <path d="M30.500 6.400 V8 M32.700 6.400 V8 M34.900 6.400 V8 M37 8 V12" stroke="#6f9ad8" stroke-width="0.800"/>
  <ellipse cx="34" cy="10.400" rx="1.200" ry="0.900" fill="#111"/>
  <path d="M36.100 10.200 L37 12.600 L39.600 12.700 L37.600 14.300 L38.300 16.800 L36.100 15.400 L33.900 16.800 L34.600 14.300 L32.600 12.700 L35.200 12.600 Z" fill="#2c8ad8"/>
  <!-- white square -->
  <rect x="51.500" y="5.500" width="13" height="12" fill="#fff" stroke="#707070" stroke-width="1"/>
  <path d="M71.200 8.300 H79.200 L75.200 13.700 Z" fill="#000"/>
  <g fill="#9aa2c2"><rect x="100.8" y="11.1" width="1.300" height="1.300"/><rect x="97.8" y="14.1" width="1.300" height="1.300"/><rect x="100.8" y="14.1" width="1.300" height="1.300"/><rect x="94.8" y="17.1" width="1.300" height="1.300"/><rect x="97.8" y="17.1" width="1.300" height="1.300"/><rect x="100.8" y="17.1" width="1.300" height="1.300"/><rect x="91.8" y="20.1" width="1.300" height="1.300"/><rect x="94.8" y="20.1" width="1.300" height="1.300"/><rect x="97.8" y="20.1" width="1.300" height="1.300"/><rect x="100.8" y="20.1" width="1.300" height="1.300"/></g>
  <g fill="#ffffff"><rect x="100.0" y="10.3" width="1.400" height="1.400"/><rect x="97.0" y="13.3" width="1.400" height="1.400"/><rect x="100.0" y="13.3" width="1.400" height="1.400"/><rect x="94.0" y="16.3" width="1.400" height="1.400"/><rect x="97.0" y="16.3" width="1.400" height="1.400"/><rect x="100.0" y="16.3" width="1.400" height="1.400"/><rect x="91.0" y="19.3" width="1.400" height="1.400"/><rect x="94.0" y="19.3" width="1.400" height="1.400"/><rect x="97.0" y="19.3" width="1.400" height="1.400"/><rect x="100.0" y="19.3" width="1.400" height="1.400"/></g>
</svg>

</div>
</body>
</html>
